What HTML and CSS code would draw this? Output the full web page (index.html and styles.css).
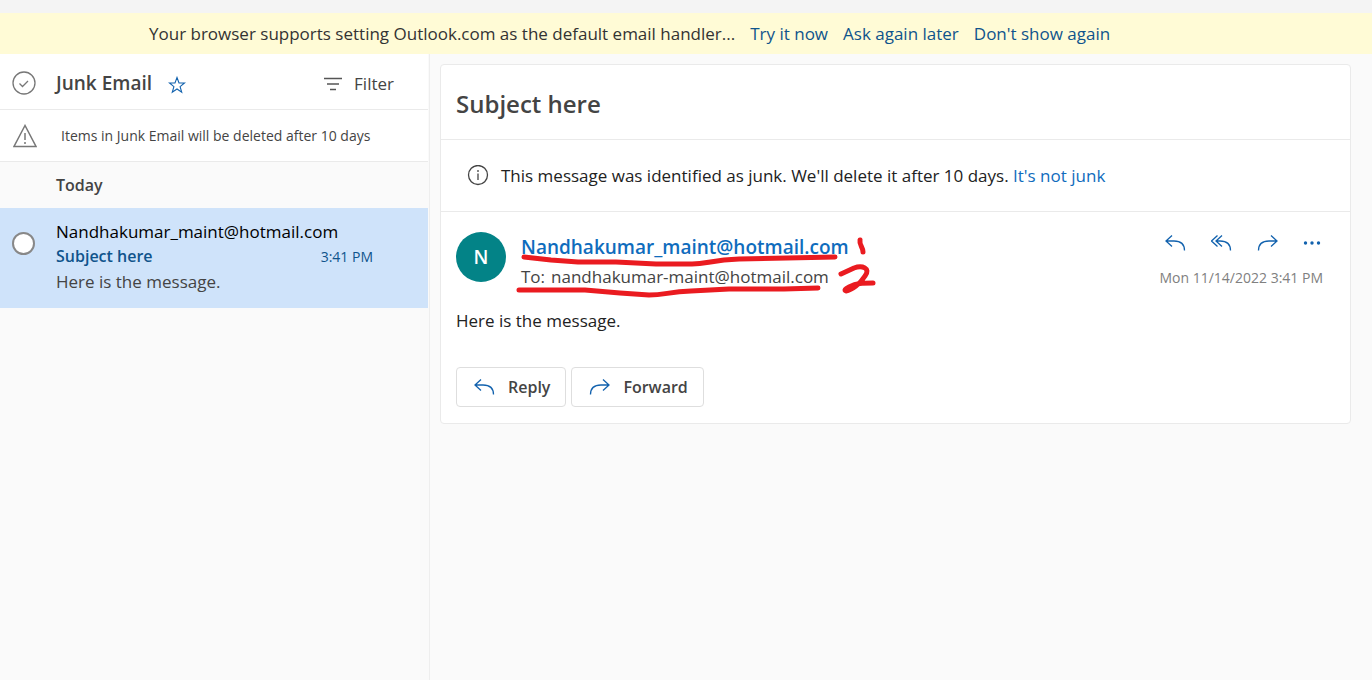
FILE: index.html
```html
<!DOCTYPE html>
<html lang="en">
<head>
<meta charset="utf-8">
<title>Junk Email - Outlook</title>
<link rel="stylesheet" href="styles.css">
</head>
<body>
<svg class="sprite" aria-hidden="true">
  <symbol id="reply" viewBox="0 0 22 18"><path d="M7 1.500 1 7l6 5.500M1 7H9c7 0 10.500 3.500 10.500 9.500"/></symbol>
  <symbol id="reply-all" viewBox="0 0 22 18"><path d="M6.500 1.500.500 7l6 5.500M11 1.500 5 7l6 5.500M5 7H9c7 0 10.500 3.500 10.500 9.500"/></symbol>
  <symbol id="forward" viewBox="0 0 22 18"><path d="M14 1.500l6 5.500-6 5.500M20 7H12c-7 0-10.500 3.500-10.500 9.500"/></symbol>
</svg>
<div class="strip"></div>
<div class="banner">
  <span>Your browser supports setting Outlook.com as the default email handler...</span>
  <a href="#">Try it now</a>
  <a href="#">Ask again later</a>
  <a href="#">Don't show again</a>
</div>
<div class="mail">
  <section class="list">
    <header class="list-header">
      <button class="icon-button" aria-label="Select all">
        <svg width="24" height="24" viewBox="0 0 24 24"><circle cx="12" cy="12" r="11"/><path d="M7.500 12.500l3 3L16 10"/></svg>
      </button>
      <h1 class="folder">Junk Email</h1>
      <button class="icon-button star" aria-label="Add to favorites">
        <svg width="18" height="18" viewBox="0 0 18 18"><path d="M9 1.500l2 5.500h5.500l-4.400 3.600 1.600 5.600L9 13l-4.700 3.200 1.600-5.600L1.500 7H7z"/></svg>
      </button>
      <button class="filter">
        <svg width="18" height="14" viewBox="0 0 18 14"><path d="M0 1.500h18M3 7h12M6 12.500h6"/></svg>
        Filter
      </button>
    </header>
    <div class="notice">
      <svg width="24" height="24" viewBox="0 0 24 24"><path d="M12 1.500 1 22.500h22zM12 9v7M12 18v2"/></svg>
      <span>Items in Junk Email will be deleted after 10 days</span>
    </div>
    <h2 class="day">Today</h2>
    <article class="item">
      <input class="pick" type="checkbox" aria-label="Select message">
      <div class="item-text">
        <div class="item-from">Nandhakumar_maint@hotmail.com</div>
        <div class="item-subject"><span>Subject here</span><time>3:41 PM</time></div>
        <div class="item-preview">Here is the message.</div>
      </div>
    </article>
  </section>
  <main class="reading">
    <div class="card">
      <h2 class="subject">Subject here</h2>
      <div class="junk-info">
        <svg width="22" height="22" viewBox="0 0 22 22"><circle cx="11" cy="10" r="9.500"/><path d="M11 8.500V15M11 5v2"/></svg>
        <p>This message was identified as junk. We'll delete it after 10 days. <a href="#">It's not junk</a></p>
      </div>
      <div class="message">
        <div class="message-head">
          <div class="avatar">N</div>
          <div class="people">
            <a class="sender" href="#">Nandhakumar_maint@hotmail.com</a>
            <div class="to"><span>To:</span><span>nandhakumar-maint@hotmail.com</span></div>
            <svg class="marks" width="370" height="70" viewBox="0 0 370 70" aria-hidden="true">
              <path d="M13 25L40 28 67 30 105 30 145 32H178C194 33 199 28 228 27L276 26 324 25"/>
              <path d="M8 58H74L109 61 138 63C154 63 157 60 180 59L218 57 273 57 307 56"/>
              <path d="M349 8C348 13 352 15 352 20"/>
              <path d="M330 42L343 36C351 33 360 36 354 44C349 52 341 58 335 59Q332 58 338 55C346 51 351 51 362 51"/>
            </svg>
          </div>
          <div class="meta">
            <div class="actions">
              <button class="icon-button" aria-label="Reply"><svg width="22" height="18"><use href="#reply"/></svg></button>
              <button class="icon-button" aria-label="Reply all"><svg width="22" height="18"><use href="#reply-all"/></svg></button>
              <button class="icon-button" aria-label="Forward"><svg width="22" height="18"><use href="#forward"/></svg></button>
              <button class="icon-button more" aria-label="More actions"><svg width="18" height="18" viewBox="0 0 18 18"><circle cx="2.500" cy="9" r="1.700"/><circle cx="9" cy="9" r="1.700"/><circle cx="15.500" cy="9" r="1.700"/></svg></button>
            </div>
            <time>Mon 11/14/2022 3:41 PM</time>
          </div>
        </div>
        <p class="body">Here is the message.</p>
        <div class="respond">
          <button><svg width="22" height="18"><use href="#reply"/></svg>Reply</button>
          <button><svg width="22" height="18"><use href="#forward"/></svg>Forward</button>
        </div>
      </div>
    </div>
  </main>
</div>
</body>
</html>
```
FILE: styles.css
```css
* { box-sizing: border-box; }
body {
  margin: 0;
  min-height: 100vh;
  display: flex;
  flex-direction: column;
  font: 17px/25px "Open Sans", "Noto Sans", sans-serif;
  color: #222;
  background: #fafafa;
}
h1, h2, p { margin: 0; }
a { color: #0f6cbd; text-decoration: none; }
button { font: inherit; color: inherit; background: none; border: 0; padding: 0; }
svg { display: block; flex: none; fill: none; stroke: #1262ae; stroke-width: 1.3; }
.sprite { position: absolute; width: 0; height: 0; }
.strip { height: 13px; background: #f4f4f4; }
.banner {
  display: flex;
  gap: 15px;
  padding: 8px 16px 8px 149px;
  font-weight: 500;
  color: #333;
  background: #fffbd6;
  white-space: nowrap;
}
.banner a { color: #0f548c; }
.mail { flex: 1; display: flex; }

.list { flex: 0 0 430px; padding-right: 1px; border-right: 1px solid #eee; }
.list-header {
  display: flex;
  align-items: center;
  height: 56px;
  padding: 2px 34px 0 12px;
  background: #fff;
  border-bottom: 1px solid #eaeaea;
}
.list-header .icon-button svg { stroke: #777; }
.folder { margin-left: 20px; font-size: 19px; line-height: 26px; font-weight: 600; color: #444; }
.star { margin: 4px 0 0 16px; }
.list-header .star svg { stroke: #1262ae; stroke-width: 1.1; }
.filter { display: flex; align-items: center; gap: 12px; margin: 2px 0 0 auto; color: #444; }
.filter svg { stroke: #555; stroke-width: 1.5; }
.notice {
  display: flex;
  align-items: center;
  gap: 24px;
  height: 52px;
  padding-left: 13px;
  background: #fff;
  border-bottom: 1px solid #eaeaea;
  font-size: 14px;
  color: #444;
}
.notice svg { stroke: #777; stroke-width: 1.5; }
.day { padding: 11px 56px 10px; font-size: 16px; line-height: 25px; font-weight: 600; color: #444; }
.item { display: flex; padding: 11px 55px 14px 12px; background: #cfe3fa; }
.pick {
  appearance: none;
  width: 23px;
  height: 23px;
  margin: 13px 21px 0 0;
  border: 2px solid #888;
  border-radius: 50%;
  background: #fff;
}
.item-text { flex: 1; }
.item-from { color: #000; font-weight: 500; }
.item-subject { display: flex; justify-content: space-between; font-size: 16px; font-weight: 600; color: #0f548c; }
.item-subject time { font-size: 14px; font-weight: 500; }
.item-preview { color: #444; }

.reading { flex: 1; padding: 10px 21px 16px 10px; }
.card { background: #fff; border: 1px solid #eaeaea; border-radius: 4px; }
.subject { padding: 23px 15px 19px; font-size: 24px; line-height: 32px; font-weight: 600; color: #444; }
.junk-info {
  display: flex;
  align-items: center;
  gap: 12px;
  padding: 23px 26px;
  border: 1px solid #eaeaea;
  border-width: 1px 0;
}
.junk-info svg { stroke: #444; }
.message { padding: 20px 15px 16px; }
.message-head { display: flex; }
.avatar {
  width: 50px;
  height: 50px;
  border-radius: 50%;
  background: #038387;
  color: #fff;
  font-size: 19px;
  font-weight: 600;
  line-height: 50px;
  text-align: center;
}
.people { position: relative; margin-left: 15px; padding-top: 2px; }
.sender { font-size: 19px; font-weight: 600; line-height: 26px; }
.to { display: flex; gap: 6px; margin-top: 4px; color: #444; }
.marks { position: absolute; left: -10px; top: 0; stroke: #ea1b20; stroke-width: 5; stroke-linecap: round; stroke-linejoin: round; }
.meta { margin-left: auto; padding-right: 12px; text-align: right; color: #808080; font-size: 14px; }
.actions { display: flex; justify-content: flex-end; gap: 24px; height: 32px; margin-bottom: 1px; padding-right: 2px; }
.actions .icon-button { display: flex; padding-top: 2px; }
.more svg { fill: #1262ae; stroke: none; }
.body { padding: 18px 0; }
.respond { display: flex; gap: 5px; margin-top: 16px; }
.respond button {
  display: flex;
  align-items: center;
  gap: 12px;
  height: 40px;
  padding: 0 15px 0 17px;
  border: 1px solid #dedede;
  border-radius: 4px;
  font-size: 16px;
  font-weight: 600;
  color: #444;
}
```
